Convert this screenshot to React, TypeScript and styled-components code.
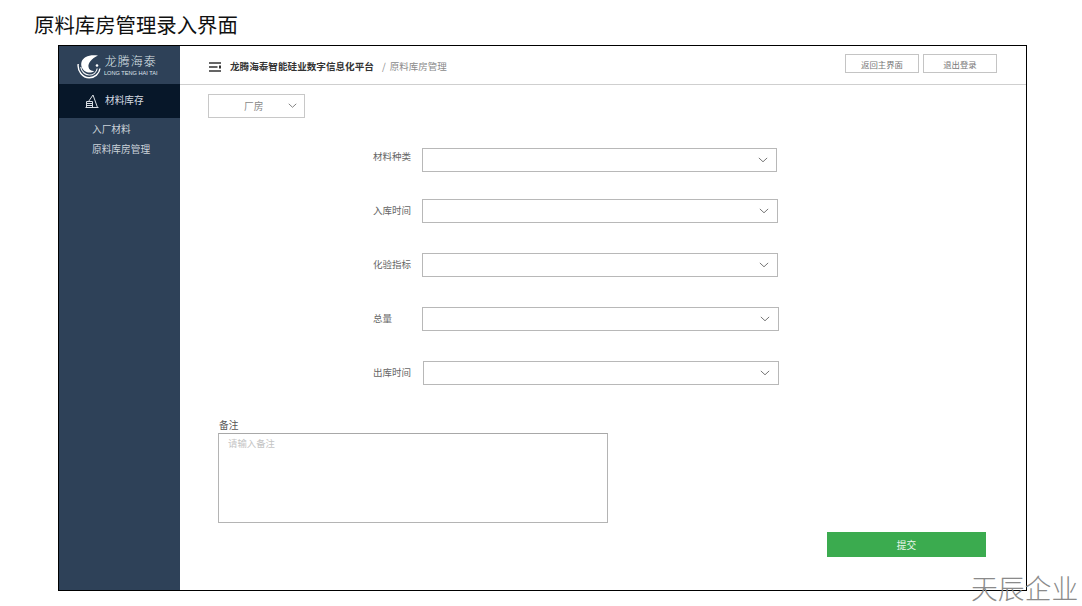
import React from "react";
import styled, { createGlobalStyle } from "styled-components";

const Global = createGlobalStyle`
  html, body { margin: 0; padding: 0; background: #fff; overflow: hidden; }
  body { font-family: "Noto Sans CJK SC", "Liberation Sans", sans-serif; width: 1082px; height: 606px; }
  * { box-sizing: border-box; }
`;

const Page = styled.div`
  position: relative;
  width: 1082px;
  height: 606px;
  display: flex;
  flex-direction: column;
`;
const PageTitle = styled.h1`
  margin: 0;
  height: 45px;
  padding: 9px 0 0 34px;
  font-size: 20.4px;
  line-height: 30px;
  font-weight: 400;
  color: #111;
`;
const Frame = styled.div`
  width: 969px;
  height: 546px;
  margin-left: 58px;
  border: 1px solid #000;
  display: flex;
`;
const Sidebar = styled.aside`
  width: 121px;
  flex: none;
  background: #2e4158;
  display: flex;
  flex-direction: column;
`;
const Brand = styled.div`
  height: 38px;
  padding: 8px 0 0 18px;
  display: flex;
  gap: 3px;
  color: #dfe5ea;
`;
const BrandText = styled.div`
  display: flex;
  flex-direction: column;
  align-items: center;
  margin-top: -2px;
`;
const BrandName = styled.span`
  font-size: 12px;
  line-height: 17px;
  letter-spacing: 1px;
  font-weight: 300;
`;
const BrandLatin = styled.span`
  font-family: "Liberation Sans", sans-serif;
  font-size: 5.6px;
  line-height: 8px;
  white-space: nowrap;
`;
const ActiveItem = styled.div`
  height: 34px;
  background: #071729;
  display: flex;
  align-items: center;
  padding: 0 0 0 26px;
  gap: 6px;
  color: #d4dae0;
  font-size: 9.7px;
`;
const ActiveLabel = styled.span`
  margin-bottom: 2px;
`;
const SubMenu = styled.div`
  padding: 3px 0 0 33px;
  display: flex;
  flex-direction: column;
`;
const SubItem = styled.div`
  height: 20px;
  line-height: 16px;
  font-size: 9.7px;
  color: #ccd3da;
`;
const Content = styled.main`
  flex: 1;
  display: flex;
  flex-direction: column;
  min-width: 0;
`;
const Header = styled.header`
  height: 39px;
  flex: none;
  border-bottom: 1px solid #cfcfcf;
  display: flex;
  align-items: center;
  padding: 0 29px 0 29px;
`;
const HeaderTitle = styled.span`
  margin: 2px 0 0 9px;
  font-size: 9.6px;
  font-weight: 700;
  color: #333;
  white-space: nowrap;
`;
const Crumb = styled.span`
  margin: 2px 0 0 8px;
  font-size: 9.5px;
  word-spacing: 2px;
  color: #8a8a8a;
  white-space: nowrap;
`;
const HeaderActions = styled.div`
  margin-left: auto;
  margin-bottom: 3px;
  display: flex;
  gap: 4px;
`;
const HeaderButton = styled.button`
  width: 74px;
  height: 19px;
  padding: 0;
  background: #fff;
  border: 1px solid #c4c4c4;
  font-family: inherit;
  font-size: 8.4px;
  color: #777;
`;
const Body = styled.div`
  position: relative;
  flex: 1;
  display: flex;
  flex-direction: column;
  padding: 9px 0 0 28px;
`;
const FactorySelect = styled.div`
  width: 97px;
  height: 24px;
  border: 1px solid #c8c8c8;
  display: flex;
  align-items: center;
  padding: 0 7px 0 35px;
  justify-content: space-between;
  font-size: 9.7px;
  color: #888;
`;
const Form = styled.div`
  padding: 30px 0 0 165px;
  display: flex;
  flex-direction: column;
`;
const Row = styled.div<{ $top: number; $gap: number }>`
  display: flex;
  align-items: center;
  margin-top: ${(p) => p.$top}px;
  gap: ${(p) => p.$gap}px;
`;
const Label = styled.label<{ $lift: number }>`
  width: 38px;
  margin-bottom: ${(p) => p.$lift}px;
  font-size: 9.5px;
  color: #666;
  white-space: nowrap;
`;
const Field = styled.div<{ $width: number }>`
  width: ${(p) => p.$width}px;
  height: 24px;
  border: 1px solid #b8b8b8;
  display: flex;
  align-items: center;
  justify-content: flex-end;
  padding-right: 8px;
  background: #fff;
`;
const NoteBlock = styled.div`
  margin: 34px 0 0 10px;
  display: flex;
  flex-direction: column;
`;
const NoteLabel = styled.label`
  font-size: 9.7px;
  line-height: 13px;
  color: #555;
  padding-left: 1px;
`;
const NoteArea = styled.textarea`
  width: 390px;
  height: 90px;
  margin-top: 1px;
  padding: 2px 9px;
  border: 1px solid #b4b4b4;
  border-top-color: #a8a8a8;
  border-radius: 0;
  resize: none;
  outline: none;
  font-family: inherit;
  font-size: 9.4px;
  line-height: 14px;
  &::placeholder { color: #c4c4c4; opacity: 1; }
`;
const SubmitRow = styled.div`
  display: flex;
  justify-content: flex-end;
  margin-top: 9px;
  padding-right: 40px;
`;
const Submit = styled.button`
  width: 159px;
  height: 25px;
  padding: 0;
  background: #3bab4f;
  border: none;
  color: #e9f6eb;
  font-family: inherit;
  font-size: 9.7px;
`;
const Watermark = styled.div`
  position: absolute;
  left: 971px;
  top: 570px;
  font-size: 26.8px;
  line-height: 35px;
  font-weight: 300;
  color: #8a8a8a;
  white-space: nowrap;
`;

const Chevron = ({ size = 10 }: { size?: number }) => (
  <svg width={size} height={size * 0.6} viewBox="0 0 12 7" fill="none">
    <path d="M1 1l5 4.6L11 1" stroke="#777" strokeWidth="1.200" />
  </svg>
);

const LogoMark = () => (
  <svg width="24" height="25" viewBox="0 0 24 25" fill="none" style={{ flex: "none" }}>
    <path d="M21 1.500C13 .2 6 2.500 4.500 8c-1.300 4.500 1.500 8.800 5.500 10.200 2.700.8 5.300.3 7.300-1.200-3 .2-5.300-1.300-5.800-4-.6-4 3-8.500 9.500-11.500z" fill="#fff" />
    <path d="M1.200 10c-1 7 4.500 13.800 11 13.800 5.500 0 10-4 10.800-9.300" stroke="#fff" strokeWidth="1.400" />
    <path d="M3.800 13c.5 4.800 4.400 8 8.400 8 4 0 7.300-2.700 8-6.500" stroke="#eef1f3" strokeWidth="1.200" />
    <circle cx="20" cy="11.500" r="1.300" fill="#fff" />
  </svg>
);

const StoreIcon = () => (
  <svg width="14" height="14" viewBox="0 0 14 14" fill="none" stroke="#d8dde2" strokeWidth="1">
    <path d="M.5 13.500h13" />
    <path d="M1.500 13.500V7.500h6v6" />
    <path d="M1.500 9.500h6M1.500 11.500h6" />
    <path d="M3.500 7.500L8 1l4.500 12.500" />
  </svg>
);

const MenuIcon = () => (
  <svg width="12" height="10" viewBox="0 0 12 10" fill="none" style={{ flex: "none", marginTop: "4px" }}>
    <path d="M0 1h12M0 5h8.500M0 9h12" stroke="#333" strokeWidth="1.500" />
    <path d="M10 3.500h2v3h-2z" fill="#333" />
  </svg>
);

const rows = [
  { label: "材料种类", top: 0, gap: 11, width: 355, lift: 8 },
  { label: "入库时间", top: 27, gap: 11, width: 356, lift: 3 },
  { label: "化验指标", top: 30, gap: 11, width: 356, lift: 3 },
  { label: "总量", top: 30, gap: 11, width: 357, lift: 2 },
  { label: "出库时间", top: 30, gap: 12, width: 356, lift: 2 },
];

export default function App() {
  return (
    <Page>
      <Global />
      <PageTitle>原料库房管理录入界面</PageTitle>
      <Frame>
        <Sidebar>
          <Brand>
            <LogoMark />
            <BrandText>
              <BrandName>龙腾海泰</BrandName>
              <BrandLatin>LONG TENG HAI TAI</BrandLatin>
            </BrandText>
          </Brand>
          <ActiveItem>
            <StoreIcon />
            <ActiveLabel>材料库存</ActiveLabel>
          </ActiveItem>
          <SubMenu>
            <SubItem>入厂材料</SubItem>
            <SubItem>原料库房管理</SubItem>
          </SubMenu>
        </Sidebar>
        <Content>
          <Header>
            <MenuIcon />
            <HeaderTitle>龙腾海泰智能硅业数字信息化平台</HeaderTitle>
            <Crumb>/ 原料库房管理</Crumb>
            <HeaderActions>
              <HeaderButton>返回主界面</HeaderButton>
              <HeaderButton>退出登录</HeaderButton>
            </HeaderActions>
          </Header>
          <Body>
            <FactorySelect>
              厂房
              <Chevron size={9} />
            </FactorySelect>
            <Form>
              {rows.map((r) => (
                <Row key={r.label} $top={r.top} $gap={r.gap}>
                  <Label $lift={r.lift}>{r.label}</Label>
                  <Field $width={r.width}>
                    <Chevron />
                  </Field>
                </Row>
              ))}
            </Form>
            <NoteBlock>
              <NoteLabel>备注</NoteLabel>
              <NoteArea placeholder="请输入备注" readOnly />
            </NoteBlock>
            <SubmitRow>
              <Submit>提交</Submit>
            </SubmitRow>
          </Body>
        </Content>
      </Frame>
      <Watermark>天辰企业</Watermark>
    </Page>
  );
}
